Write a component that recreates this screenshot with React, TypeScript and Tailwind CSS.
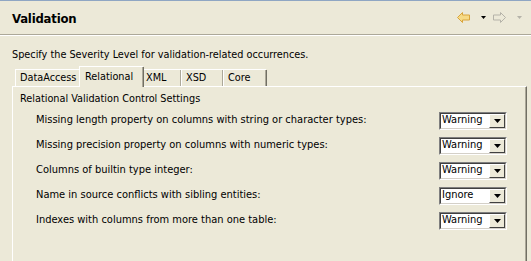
import React from "react";

const font = { fontFamily: '"DejaVu Sans Condensed", "DejaVu Sans", sans-serif' };

function Combo({ value }: { value: string }) {
  return (
    <div className="flex h-[18px] w-[68px] items-stretch border border-t-[#7f7f7f] border-l-[#7f7f7f] border-r-white border-b-white bg-white">
      <div className="flex flex-1 items-stretch border border-t-[#404040] border-l-[#404040] border-r-[#d4d0c8] border-b-[#d4d0c8]">
        <div className="flex flex-1 items-center pl-[1px] text-[11px] text-black">{value}</div>
        <div className="flex w-[16px] items-center justify-center border border-t-white border-l-white border-r-[#404040] border-b-[#404040] bg-[#ECE9D8]">
          <svg width="7" height="4" viewBox="0 0 7 4">
            <path d="M0 0H7L3.5 4Z" fill="#000" />
          </svg>
        </div>
      </div>
    </div>
  );
}

function Row({ label, value }: { label: string; value: string }) {
  return (
    <div className="flex h-[25px] items-center justify-between pl-[23px] pr-[18px]">
      <span className="text-[11px] text-black">{label}</span>
      <Combo value={value} />
    </div>
  );
}

function Tab({ label, w, selected }: { label: string; w: string; selected?: boolean }) {
  if (selected) {
    return (
      <div className={`relative z-10 -mx-[2px] mb-[-1px] flex h-[21px] items-start border-l border-t border-white bg-[#ECE9D8] px-[5px] pt-[2px] ${w}`}>
        <span className="text-[10.8px]">{label}</span>
        <div className="absolute right-[-1px] top-0 h-full w-[2px] border-l border-[#ACA899] border-r border-r-[#716F64]" />
      </div>
    );
  }
  return (
    <div className={`relative mt-[3px] flex h-[17px] items-center border-l border-t border-white px-[4px] ${w}`}>
      <span className="text-[10.8px]">{label}</span>
      <div className="absolute right-[-1px] top-0 h-full w-[2px] border-l border-[#ACA899] border-r border-r-[#716F64]" />
    </div>
  );
}

export default function App() {
  return (
    <div className="relative h-[261px] w-[531px] overflow-hidden bg-[#ECE9D8] text-black" style={font}>
      <div className="h-[1px] bg-[#8FA6C3]" />
      <div className="flex h-[33px] items-center justify-between pl-[12px] pr-[8px] pt-[3px]">
        <span className="text-[13px] font-bold tracking-[-0.2px]">Validation</span>
        <div className="mb-[3px] flex items-center">
          <svg width="13" height="11" viewBox="0 0 13 11" className="mr-[11px]">
            <path d="M0.5 5.5L5.5 0.5V3H12.5V8H5.5V10.5Z" fill="#F6DA85" stroke="#D9A43C" strokeWidth="1" strokeLinejoin="round" />
          </svg>
          <svg width="6" height="3" viewBox="0 0 6 3" className="mr-[6px]">
            <path d="M0 0H5L2.5 3Z" fill="#000" />
          </svg>
          <svg width="13" height="11" viewBox="0 0 13 11" className="mr-[11px]">
            <path d="M12.5 5.5L7.5 0.5V3H0.5V8H7.5V10.5Z" fill="none" stroke="#B5B3A9" strokeWidth="1" strokeLinejoin="round" />
          </svg>
          <svg width="6" height="3" viewBox="0 0 6 3">
            <path d="M0 0H5L2.5 3Z" fill="#B5B3A9" />
          </svg>
        </div>
      </div>
      <div className="h-[1px] bg-[#ACA899]" />
      <div className="h-[1px] bg-white" />
      <div className="pl-[12px] pt-[12px] text-[10.8px] leading-[13px]">
        Specify the Severity Level for validation-related occurrences.
      </div>
      <div className="ml-[12px] mr-[4px] mt-[4px]">
        <div className="flex h-[21px] items-end pl-[3px]">
          <Tab label="DataAccess" w="w-[66px]" />
          <Tab label="Relational" w="w-[64px]" selected />
          <Tab label="XML" w="w-[40px]" />
          <Tab label="XSD" w="w-[42px]" />
          <Tab label="Core" w="w-[43px]" />
        </div>
        <div className="h-[200px] border-l border-t border-white border-r border-r-[#716F64] border-b border-b-[#716F64]">
          <div className="h-full border-r border-[#ACA899]">
            <div className="pl-[7px] pt-[5px] text-[10.8px] leading-[13px]">Relational Validation Control Settings</div>
            <div className="mt-[3px]">
              <Row label="Missing length property on columns with string or character types:" value="Warning" />
              <Row label="Missing precision property on columns with numeric types:" value="Warning" />
              <Row label="Columns of builtin type integer:" value="Warning" />
              <Row label="Name in source conflicts with sibling entities:" value="Ignore" />
              <Row label="Indexes with columns from more than one table:" value="Warning" />
            </div>
          </div>
        </div>
      </div>
    </div>
  );
}
